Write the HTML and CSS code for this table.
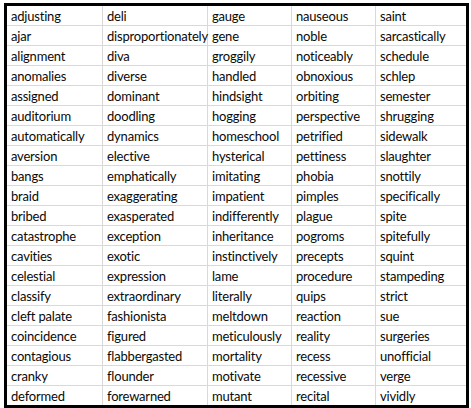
FILE: index.html
```html
<!DOCTYPE html>
<html>
<head>
<meta charset="utf-8">
<link rel="stylesheet" href="styles.css">
</head>
<body>
<table class="sheet">
<colgroup><col class="c1"><col class="c2"><col class="c3"><col class="c4"><col class="c5"></colgroup>
<tbody>
<tr><td>adjusting</td><td>deli</td><td>gauge</td><td>nauseous</td><td>saint</td></tr>
<tr><td>ajar</td><td>disproportionately</td><td>gene</td><td>noble</td><td>sarcastically</td></tr>
<tr><td>alignment</td><td>diva</td><td>groggily</td><td>noticeably</td><td>schedule</td></tr>
<tr><td>anomalies</td><td>diverse</td><td>handled</td><td>obnoxious</td><td>schlep</td></tr>
<tr><td>assigned</td><td>dominant</td><td>hindsight</td><td>orbiting</td><td>semester</td></tr>
<tr><td>auditorium</td><td>doodling</td><td>hogging</td><td>perspective</td><td>shrugging</td></tr>
<tr><td>automatically</td><td>dynamics</td><td>homeschool</td><td>petrified</td><td>sidewalk</td></tr>
<tr><td>aversion</td><td>elective</td><td>hysterical</td><td>pettiness</td><td>slaughter</td></tr>
<tr><td>bangs</td><td>emphatically</td><td>imitating</td><td>phobia</td><td>snottily</td></tr>
<tr><td>braid</td><td>exaggerating</td><td>impatient</td><td>pimples</td><td>specifically</td></tr>
<tr><td>bribed</td><td>exasperated</td><td>indifferently</td><td>plague</td><td>spite</td></tr>
<tr><td>catastrophe</td><td>exception</td><td>inheritance</td><td>pogroms</td><td>spitefully</td></tr>
<tr><td>cavities</td><td>exotic</td><td>instinctively</td><td>precepts</td><td>squint</td></tr>
<tr><td>celestial</td><td>expression</td><td>lame</td><td>procedure</td><td>stampeding</td></tr>
<tr><td>classify</td><td>extraordinary</td><td>literally</td><td>quips</td><td>strict</td></tr>
<tr><td>cleft palate</td><td>fashionista</td><td>meltdown</td><td>reaction</td><td>sue</td></tr>
<tr><td>coincidence</td><td>figured</td><td>meticulously</td><td>reality</td><td>surgeries</td></tr>
<tr><td>contagious</td><td>flabbergasted</td><td>mortality</td><td>recess</td><td>unofficial</td></tr>
<tr><td>cranky</td><td>flounder</td><td>motivate</td><td>recessive</td><td>verge</td></tr>
<tr><td>deformed</td><td>forewarned</td><td>mutant</td><td>recital</td><td>vividly</td></tr>
</tbody>
</table>
</body>
</html>
```

FILE: styles.css
```css
html, body {
  margin: 0;
  padding: 0;
  background: #ffffff;
}

body {
  padding: 3px 0 0 4px;
}

.sheet {
  border: 3px solid #000000;
  border-collapse: separate;
  border-spacing: 0;
  table-layout: fixed;
  width: 465px;
  font-family: Lato, "Liberation Sans", sans-serif;
  font-size: 13px;
  letter-spacing: -0.2px;
  color: #0a0a0a;
}

.c1 { width: 96px; }
.c2 { width: 105px; }
.c3 { width: 84px; }
.c4 { width: 84px; }
.c5 { width: 90px; }

.sheet td {
  height: 19px;
  padding: 1px 0 0 4px;
  box-sizing: border-box;
  line-height: 18px;
  white-space: nowrap;
  overflow: visible;
  vertical-align: middle;
  border-right: 1px solid #d9d9d9;
  border-bottom: 1px solid #d9d9d9;
}

.sheet td:last-child {
  border-right: none;
}

.sheet tr:last-child td {
  border-bottom: none;
}
```
